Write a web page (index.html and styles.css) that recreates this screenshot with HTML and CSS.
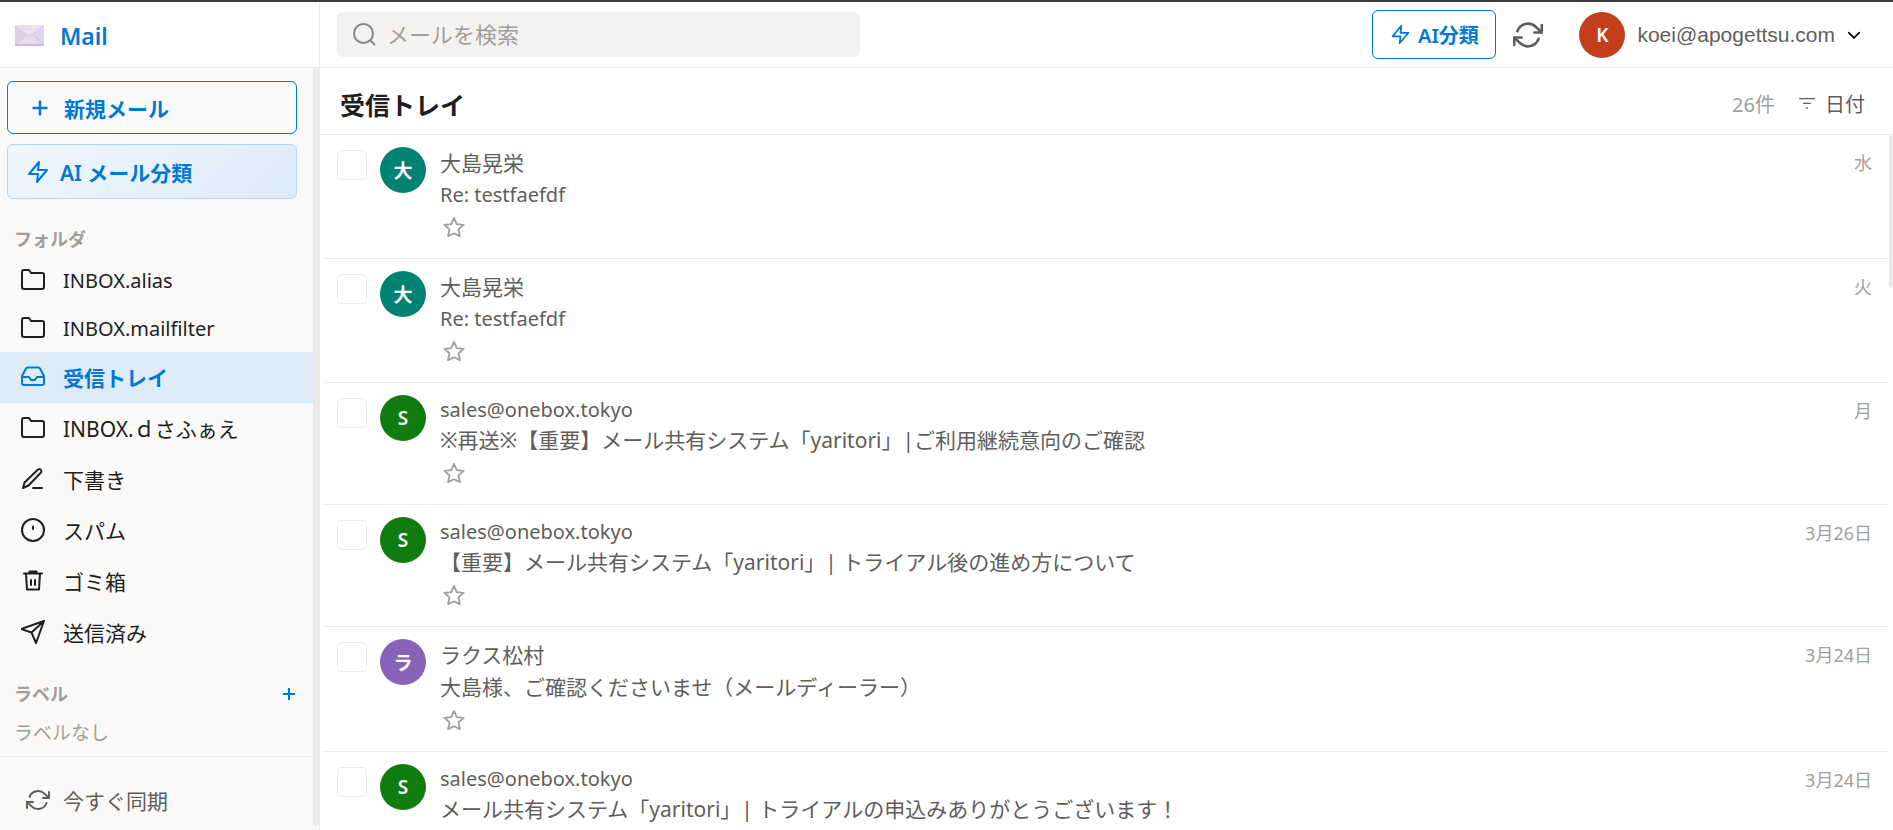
FILE: index.html
```html
<!DOCTYPE html>
<html lang="ja">
<head>
  <meta charset="UTF-8">
  <meta name="viewport" content="width=device-width, initial-scale=1.0">
  <title>Mail</title>
  <link rel="stylesheet" href="styles.css">
</head>
<body>
  <!-- アイコン定義 -->
  <svg class="icon-defs" aria-hidden="true">
    <symbol id="i-plus" viewBox="0 0 24 24"><path d="M12 3v18M3 12h18"/></symbol>
    <symbol id="i-bolt" viewBox="0 0 24 24"><path d="M13 2 3 14h9l-1 8 10-12h-9l1-8z"/></symbol>
    <symbol id="i-folder" viewBox="0 0 24 24"><path d="M23 19a2 2 0 0 1-2 2H3a2 2 0 0 1-2-2V4a2 2 0 0 1 2-2h5l2 3h11a2 2 0 0 1 2 2z"/></symbol>
    <symbol id="i-inbox" viewBox="0 0 24 24"><path d="M23 12h-7l-2 3h-4l-2-3H1"/><path d="M5 3.500 1 11v7a2 2 0 0 0 2 2h18a2 2 0 0 0 2-2v-7l-4-7.500A2 2 0 0 0 17.300 2.500H6.700A2 2 0 0 0 5 3.500z"/></symbol>
    <symbol id="i-pen" viewBox="0 0 24 24"><path d="M12 21h9"/><path d="M16.500 3a2.100 2.100 0 0 1 3.500 2.500L7.500 18.500 2 21l1.500-5.500z"/></symbol>
    <symbol id="i-alert" viewBox="0 0 24 24"><circle cx="12" cy="12" r="11"/><path d="M12 8.500v2.500"/></symbol>
    <symbol id="i-trash" viewBox="0 0 24 24"><path d="M3 4.500h18M5 4.500l1 16h12l1-16M8.500 4.500v-2h7v2M10 11v5M14 11v5"/></symbol>
    <symbol id="i-send" viewBox="0 0 24 24"><path d="M23 1 10.500 12.500M23 1l-8 22-4.500-10.500L0 9z"/></symbol>
    <symbol id="i-sync" viewBox="0 0 24 24"><path d="M23 4v6h-6M1 20v-6h6"/><path d="M3.500 9a9 9 0 0 1 14.900-3.400L23 10M1 14l4.600 4.400A9 9 0 0 0 20.500 15"/></symbol>
    <symbol id="i-search" viewBox="0 0 24 24"><circle cx="11.500" cy="11.500" r="9.500"/><path d="m18.500 18.500 4 4"/></symbol>
    <symbol id="i-filter" viewBox="0 0 24 24"><path d="M1 4h22M7 11h10M11.500 18h1"/></symbol>
    <symbol id="i-chevron" viewBox="0 0 24 24"><path d="m3 8 9 9 9-9"/></symbol>
    <symbol id="i-star" viewBox="0 0 24 24"><path d="m12 2 3 6.900 7.500.700-5.600 5 1.600 7.400-6.500-3.200L5.500 22l1.600-7.400-5.600-5L9 8.900z"/></symbol>
  </svg>

  <div class="app">
    <aside class="sidebar">
      <div class="brand">
        <svg class="brand-logo" viewBox="0 0 29 21" aria-hidden="true">
          <rect width="29" height="21" rx="1" fill="#e6dcf0"/>
          <path d="M0 1l11 9L0 20z" fill="#ddd0e6"/>
          <path d="M29 1l-11 9 11 10z" fill="#e0d5ec"/>
          <path d="M0 0h29L16 10.500q-1.500 1-3 0z" fill="#e7e2e9"/>
          <path d="M0 1l13 9.500q1.500 1 3 0L29 1M0 20l11-10M29 20L18 10" fill="none" stroke="#cfc0dc" stroke-width=".8"/>
          <path d="M0 19h29v1q0 1-1 1H1q-1 0-1-1z" fill="#d2b4ee"/>
        </svg>
        <span class="brand-name">Mail</span>
      </div>

      <div class="sidebar-body">
        <div class="sidebar-content">
          <div class="actions">
            <button class="action compose" type="button"><svg class="icon"><use href="#i-plus"/></svg>新規メール</button>
            <button class="action classify" type="button"><svg class="icon"><use href="#i-bolt"/></svg>AI メール分類</button>
          </div>

          <h2 class="section-title">フォルダ</h2>
          <nav class="folders">
            <a class="folder latin" href="#"><svg class="icon"><use href="#i-folder"/></svg>INBOX.alias</a>
            <a class="folder latin" href="#"><svg class="icon"><use href="#i-folder"/></svg>INBOX.mailfilter</a>
            <a class="folder active" href="#"><svg class="icon"><use href="#i-inbox"/></svg>受信トレイ</a>
            <a class="folder" href="#"><svg class="icon"><use href="#i-folder"/></svg>INBOX.ｄさふぁえ</a>
            <a class="folder" href="#"><svg class="icon"><use href="#i-pen"/></svg>下書き</a>
            <a class="folder" href="#"><svg class="icon"><use href="#i-alert"/></svg>スパム</a>
            <a class="folder" href="#"><svg class="icon"><use href="#i-trash"/></svg>ゴミ箱</a>
            <a class="folder" href="#"><svg class="icon"><use href="#i-send"/></svg>送信済み</a>
          </nav>

          <div class="label-head">
            <h2 class="section-title">ラベル</h2>
            <button class="label-add" type="button" aria-label="ラベルを追加"><svg class="icon"><use href="#i-plus"/></svg></button>
          </div>
          <p class="label-empty">ラベルなし</p>

          <div class="sidebar-foot">
            <button class="sync" type="button"><svg class="icon"><use href="#i-sync"/></svg>今すぐ同期</button>
          </div>
        </div>
        <div class="rail"></div>
      </div>
    </aside>

    <main class="main">
      <header class="topbar">
        <div class="search">
          <svg class="icon"><use href="#i-search"/></svg>
          <input type="search" placeholder="メールを検索" aria-label="メールを検索">
        </div>
        <div class="tools">
          <button class="ai-button" type="button"><svg class="icon"><use href="#i-bolt"/></svg>AI分類</button>
          <button class="refresh" type="button" aria-label="更新"><svg class="icon"><use href="#i-sync"/></svg></button>
          <button class="account" type="button">
            <span class="avatar red">K</span>
            <span class="account-mail">koei@apogettsu.com</span>
            <svg class="icon"><use href="#i-chevron"/></svg>
          </button>
        </div>
      </header>

      <div class="list-head">
        <h1>受信トレイ</h1>
        <span class="count">26件</span>
        <button class="sort" type="button"><svg class="icon"><use href="#i-filter"/></svg>日付</button>
      </div>

      <div class="list">
        <article class="mail">
          <input type="checkbox" aria-label="選択">
          <span class="avatar teal">大</span>
          <div class="mail-text">
            <div class="from">大島晃栄</div>
            <div class="subject latin">Re: testfaefdf</div>
            <button class="star" type="button" aria-label="スター"><svg class="icon"><use href="#i-star"/></svg></button>
          </div>
          <time>水</time>
        </article>
        <article class="mail">
          <input type="checkbox" aria-label="選択">
          <span class="avatar teal">大</span>
          <div class="mail-text">
            <div class="from">大島晃栄</div>
            <div class="subject latin">Re: testfaefdf</div>
            <button class="star" type="button" aria-label="スター"><svg class="icon"><use href="#i-star"/></svg></button>
          </div>
          <time>火</time>
        </article>
        <article class="mail">
          <input type="checkbox" aria-label="選択">
          <span class="avatar green">S</span>
          <div class="mail-text">
            <div class="from latin">sales@onebox.tokyo</div>
            <div class="subject">※再送※【重要】メール共有システム「yaritori」|ご利用継続意向のご確認</div>
            <button class="star" type="button" aria-label="スター"><svg class="icon"><use href="#i-star"/></svg></button>
          </div>
          <time>月</time>
        </article>
        <article class="mail">
          <input type="checkbox" aria-label="選択">
          <span class="avatar green">S</span>
          <div class="mail-text">
            <div class="from latin">sales@onebox.tokyo</div>
            <div class="subject">【重要】メール共有システム「yaritori」| トライアル後の進め方について</div>
            <button class="star" type="button" aria-label="スター"><svg class="icon"><use href="#i-star"/></svg></button>
          </div>
          <time>3月26日</time>
        </article>
        <article class="mail">
          <input type="checkbox" aria-label="選択">
          <span class="avatar purple">ラ</span>
          <div class="mail-text">
            <div class="from">ラクス松村</div>
            <div class="subject">大島様、ご確認くださいませ（メールディーラー）</div>
            <button class="star" type="button" aria-label="スター"><svg class="icon"><use href="#i-star"/></svg></button>
          </div>
          <time>3月24日</time>
        </article>
        <article class="mail">
          <input type="checkbox" aria-label="選択">
          <span class="avatar green">S</span>
          <div class="mail-text">
            <div class="from latin">sales@onebox.tokyo</div>
            <div class="subject">メール共有システム「yaritori」| トライアルの申込みありがとうございます！</div>
            <button class="star" type="button" aria-label="スター"><svg class="icon"><use href="#i-star"/></svg></button>
          </div>
          <time>3月24日</time>
        </article>
      </div>
    </main>
  </div>
</body>
</html>
```

FILE: styles.css
```css
* {
  box-sizing: border-box;
}
body {
  margin: 0;
  font-family: "Noto Sans", "Noto Sans CJK JP", sans-serif;
  font-size: 21px;
  color: #201f1e;
  background: #fff;
}
h1, h2, p {
  margin: 0;
}
button {
  padding: 0;
  border: none;
  background: none;
  color: inherit;
  font: inherit;
  cursor: pointer;
}
a {
  color: inherit;
  text-decoration: none;
}
.icon-defs {
  display: none;
}
.icon {
  flex: none;
  width: 24px;
  height: 24px;
  overflow: visible;
  fill: none;
  stroke: currentColor;
  stroke-width: 2;
  stroke-linecap: round;
  stroke-linejoin: round;
}

.app {
  display: flex;
  height: 100vh;
  border-top: 2px solid #3b3a39;
  overflow: hidden;
}

/* sidebar */
.sidebar {
  display: flex;
  flex-direction: column;
  flex: none;
  width: 320px;
  border-right: 1px solid #edebe9;
  background: #faf9f8;
}
.brand {
  display: flex;
  align-items: center;
  gap: 16px;
  flex: none;
  height: 66px;
  padding: 2px 15px 0;
  border-bottom: 1px solid #edebe9;
  background: #fff;
}
.brand-logo {
  width: 29px;
  height: 21px;
}
.brand-name {
  font-size: 23px;
  font-weight: 600;
  color: #0078d4;
}
.sidebar-body {
  display: flex;
  flex: 1;
  min-height: 0;
}
.sidebar-content {
  flex: 1;
  overflow: hidden;
}
.rail {
  width: 6px;
  margin-bottom: 5px;
  border-radius: 3px;
  background: #ebe9e8;
}
.actions {
  display: flex;
  flex-direction: column;
  gap: 10px;
  padding: 13px 16px 0 7px;
}
.action {
  display: flex;
  align-items: center;
  height: 53px;
  border: 1px solid #0078d4;
  border-radius: 6px;
  color: #0078d4;
  font-weight: 600;
}
.compose {
  gap: 14px;
  padding-left: 22px;
}
.compose .icon {
  width: 20px;
  height: 20px;
  stroke-width: 3;
  stroke-linecap: butt;
}
.classify {
  gap: 10px;
  height: 55px;
  padding-left: 18px;
  border-color: #b3d6f2;
  background: linear-gradient(135deg, #eff6fc, #deecf9);
}
.section-title {
  padding-left: 14px;
  font-size: 18px;
  line-height: 30px;
  font-weight: 600;
  color: #a19f9d;
}
.actions + .section-title {
  padding-top: 25px;
  padding-bottom: 2px;
}
.folder {
  display: flex;
  align-items: center;
  gap: 18px;
  height: 51px;
  padding: 0 0 2px 21px;
}
.folder.latin {
  height: 48px;
  padding-bottom: 0;
  font-size: 20px;
}
.folder.active {
  background: #deecf9;
  color: #0078d4;
  font-weight: 600;
}
.label-head {
  display: flex;
  align-items: center;
  justify-content: space-between;
  padding: 21px 16px 0 0;
}
.label-add {
  display: flex;
  color: #0078d4;
}
.label-add .icon {
  width: 16px;
  height: 16px;
  stroke-width: 3;
  stroke-linecap: butt;
}
.label-empty {
  padding: 9px 14px 7px;
  font-size: 19px;
  line-height: 31px;
  color: #a19f9d;
}
.sidebar-foot {
  padding: 23px 26px;
  border-top: 1px solid #edebe9;
  color: #605e5c;
}
.sync {
  display: flex;
  align-items: center;
  gap: 13px;
  height: 40px;
}

/* main column */
.main {
  display: flex;
  flex-direction: column;
  flex: 1;
  min-width: 0;
}
.topbar {
  display: flex;
  align-items: center;
  justify-content: space-between;
  flex: none;
  height: 66px;
  padding: 0 32px 0 17px;
  border-bottom: 1px solid #edebe9;
}
.search {
  display: flex;
  align-items: center;
  gap: 11px;
  flex: 0 1 523px;
  height: 45px;
  padding: 0 15px 2px;
  border-radius: 6px;
  background: #f3f2f1;
  color: #8a8886;
}
.search input {
  flex: 1;
  min-width: 0;
  padding: 0;
  border: none;
  outline: none;
  background: none;
  font: inherit;
  font-size: 22px;
}
.search input::placeholder {
  color: #a19f9d;
}
.tools {
  display: flex;
  align-items: center;
}
.ai-button {
  display: flex;
  align-items: center;
  justify-content: center;
  gap: 7px;
  width: 124px;
  height: 49px;
  border: 1px solid #0078d4;
  border-radius: 6px;
  color: #0078d4;
  font-size: 20px;
  font-weight: 600;
}
.ai-button .icon {
  width: 21px;
  height: 21px;
}
.refresh {
  display: flex;
  margin: 0 36px 0 17px;
  color: #605e5c;
}
.refresh .icon {
  width: 30px;
  height: 30px;
}
.account {
  display: flex;
  align-items: center;
  gap: 12px;
}
.account-mail {
  font-family: "Liberation Sans", sans-serif;
  font-size: 21px;
  color: #605e5c;
}
.account .icon {
  width: 14px;
  height: 14px;
  color: #000;
  stroke-width: 3;
}
.avatar {
  display: flex;
  align-items: center;
  justify-content: center;
  flex: none;
  width: 46px;
  height: 46px;
  border-radius: 50%;
  color: #fff;
  font-size: 19px;
  font-weight: 600;
}
.red { background: #c43e1c; }
.teal { background: #008272; }
.green { background: #107c10; }
.purple { background: #8764b8; }

.list-head {
  display: flex;
  align-items: center;
  flex: none;
  height: 67px;
  padding: 5px 28px 0 20px;
  border-bottom: 1px solid #edebe9;
}
.list-head h1 {
  flex: 1;
  font-size: 25px;
  font-weight: 600;
}
.count {
  font-size: 20px;
  color: #a19f9d;
}
.sort {
  display: flex;
  align-items: center;
  gap: 10px;
  margin-left: 24px;
  font-size: 20px;
  color: #605e5c;
}
.sort .icon {
  width: 16px;
  height: 16px;
}

/* mail list */
.list {
  position: relative;
  flex: 1;
  min-height: 0;
  overflow: hidden;
}
.list::after {
  content: "";
  position: absolute;
  top: 0;
  right: 0;
  width: 4px;
  height: 153px;
  border-radius: 4px 0 0 4px;
  background: #ebe9e8;
}
.mail {
  display: flex;
  align-items: flex-start;
  margin: 0 4px 0 2px;
  padding: 12px 17px 17px 15px;
  border-bottom: 1px solid #edebe9;
  color: #605e5c;
}
.mail input {
  appearance: none;
  flex: none;
  width: 30px;
  height: 30px;
  margin: 3px 13px 0 0;
  border: 1px solid #edebe9;
  border-radius: 5px;
}
.mail-text {
  flex: 1;
  min-width: 0;
  margin-left: 14px;
}
.from,
.subject {
  overflow: hidden;
  white-space: nowrap;
  text-overflow: ellipsis;
}
.from { line-height: 33px; }
.from.latin { line-height: 30px; font-size: 20px; }
.subject { line-height: 31px; }
.subject.latin { line-height: 30px; font-size: 20px; }
.star {
  display: flex;
  align-items: center;
  height: 31px;
  padding: 3px 3px 0;
  color: #a19f9d;
}
.star .icon {
  width: 22px;
  height: 22px;
}
.mail time {
  font-size: 18px;
  line-height: 33px;
  color: #a19f9d;
}
```
